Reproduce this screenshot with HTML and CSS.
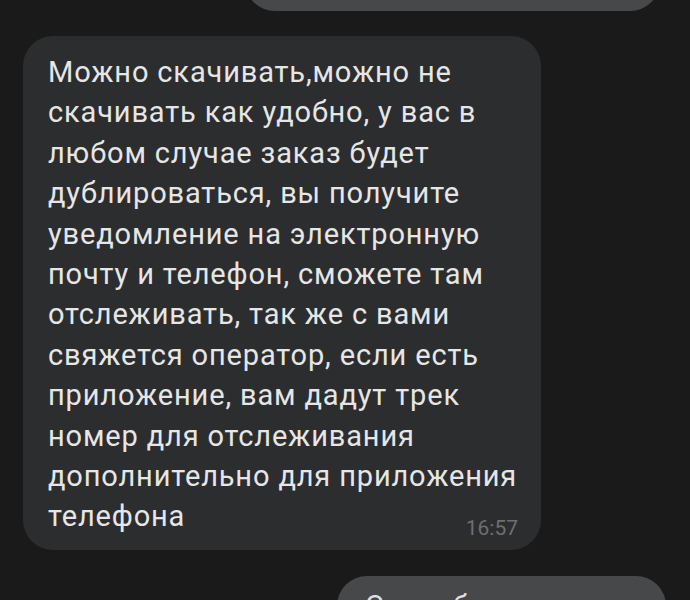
FILE: index.html
```html
<!DOCTYPE html>
<html lang="ru">
<head>
<meta charset="utf-8">
<title>Чат</title>
<link rel="stylesheet" href="styles.css">
</head>
<body>
<div class="chat">
  <div class="bubble out prev"></div>
  <div class="bubble in">
    <div class="text">
      <div class="line">Можно скачивать,можно не</div>
      <div class="line">скачивать как удобно, у вас в</div>
      <div class="line">любом случае заказ будет</div>
      <div class="line">дублироваться, вы получите</div>
      <div class="line">уведомление на электронную</div>
      <div class="line">почту и телефон, сможете там</div>
      <div class="line">отслеживать, так же с вами</div>
      <div class="line">свяжется оператор, если есть</div>
      <div class="line">приложение, вам дадут трек</div>
      <div class="line">номер для отслеживания</div>
      <div class="line">дополнительно для приложения</div>
      <div class="line">телефона</div>
    </div>
    <div class="meta"><span class="time">16:57</span></div>
  </div>
  <div class="bubble out next">
    <div class="text"><div class="line">Спасибо</div></div>
  </div>
</div>
</body>
</html>
```

FILE: styles.css
```css
html, body {
  margin: 0;
  padding: 0;
  background: #1a1a1a;
  height: 600px;
  overflow: hidden;
}

.chat {
  display: flex;
  flex-direction: column;
  align-items: flex-start;
  font-family: Roboto, "Noto Sans", sans-serif;
}

.bubble {
  border-radius: 30px;
  box-sizing: border-box;
}

.out {
  background: #474849;
}

.prev {
  margin-top: -50px;
  margin-left: 245px;
  width: 415px;
  height: 61px;
}

.in {
  background: #2c2d2f;
  margin-top: 25px;
  margin-left: 23px;
  width: 518px;
  padding: 16px 23px 11px 25px;
}

.text {
  color: #e6e6e6;
  font-size: 29px;
  line-height: 40.4px;
  letter-spacing: 0.85px;
}

.line {
  white-space: nowrap;
}

.meta {
  display: flex;
  justify-content: flex-end;
  margin-top: -18.5px;
}

.time {
  font-size: 21px;
  line-height: 21px;
  color: #6e6f71;
}

.next {
  margin-top: 26px;
  margin-left: 337px;
  width: 329px;
  height: 60px;
  padding: 10px 28px 0 28px;
}

.next .text {
  color: #e0e0e0;
}
```
